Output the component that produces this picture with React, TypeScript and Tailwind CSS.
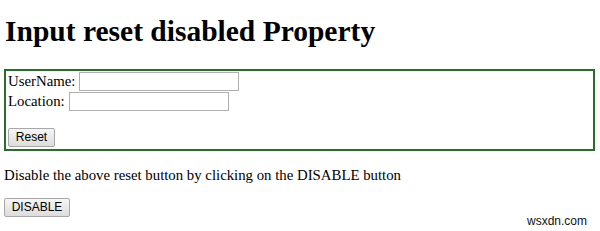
export default function App() {
  const serif = { fontFamily: '"Liberation Serif", "Times New Roman", serif' };
  const sans = { fontFamily: '"Liberation Sans", Arial, sans-serif' };
  return (
    <div className="relative h-[231px] w-[600px] overflow-hidden bg-white pl-[4px] pr-[5px] pt-[13px] text-black" style={serif}>
      <h1 className="pl-[1px] text-[29.5px] font-bold leading-[37px]">Input reset disabled Property</h1>

      <form className="mt-[19px] border-2 border-[#2b6e2b] pb-[2px] pl-[2px] text-[14.8px] leading-[20px]">
        <div className="flex h-[20px] items-center">
          <span>UserName:</span>
          <input type="text" className="ml-[4px] h-[19px] w-[160px] border border-[#b0b0b0] bg-white" />
        </div>
        <div className="flex h-[20px] items-center">
          <span>Location:</span>
          <input type="text" className="ml-[4px] h-[19px] w-[160px] border border-[#b0b0b0] bg-white" />
        </div>
        <div className="mt-[17px] flex">
          <button
            type="reset"
            className="h-[19px] w-[47px] rounded-[2px] border border-[#a8a8a8] bg-gradient-to-b from-[#f6f6f6] to-[#dcdcdc] text-[12px] leading-[17px]"
            style={sans}
          >
            Reset
          </button>
        </div>
      </form>

      <p className="mt-[14px] text-[14.8px] leading-[20px]">Disable the above reset button by clicking on the DISABLE button</p>

      <button
        type="button"
        className="mt-[13px] h-[19px] w-[66px] rounded-[2px] border border-[#a8a8a8] bg-gradient-to-b from-[#f6f6f6] to-[#dcdcdc] text-[12px] leading-[17px]"
        style={sans}
      >
        DISABLE
      </button>

      <span
        className="absolute left-[526px] top-[214px] bg-white px-[1px] text-[12px] leading-[14px] text-[#111]"
        style={sans}
      >
        wsxdn.com
      </span>
    </div>
  );
}
